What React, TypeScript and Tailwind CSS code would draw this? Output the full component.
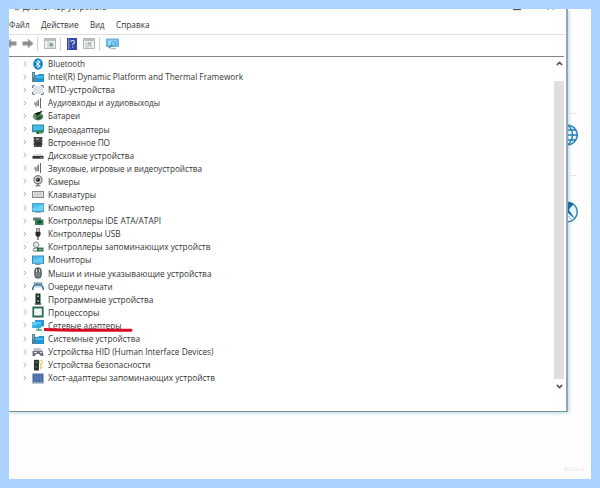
import type { ReactNode } from "react";
import { ChevronDown, ChevronRight, ChevronUp } from "lucide-react";

const icons: Record<string, ReactNode> = {
  bluetooth: (
    <>
      <ellipse cx="6" cy="6" rx="4.8" ry="5.8" fill="#0a84d8" />
      <path d="M3.6 3.8 8.2 8 6 10V2l2.2 2-4.6 4.2" fill="none" stroke="#fff" strokeWidth="1" />
    </>
  ),
  system: (
    <>
      <path d="M0 1h3v10H0z" fill="#5d808e" />
      <path d="M3 4h3l1-1h5v8H3z" fill="#2496cf" />
      <path d="M4 5h7v2H4z" fill="#4db9e8" />
      <path d="M1 3h1M1 5h1" stroke="#9be0f5" />
    </>
  ),
  mtd: (
    <>
      <path d="M1 2h10v8H1z" fill="#dce3ea" />
      <path d="M.5 4V1.5H3M9 1.5h2.5V4M.5 8v2.5H3M9 10.5h2.5V8" fill="none" stroke="#5f7180" strokeDasharray="2 .6" />
    </>
  ),
  speaker: (
    <>
      <path d="M2 5h2l3-3v8L4 8H2z" fill="#b4b7b9" />
      <path d="M6.3 3v6M8.5 1v10" stroke="#66696c" strokeWidth="1" />
      <path d="M4 6v4" stroke="#77797b" />
    </>
  ),
  battery: (
    <>
      <ellipse cx="6" cy="6.5" rx="5.2" ry="3.9" fill="#3f7952" />
      <path d="M1 7c3-4 6-4 10-2" stroke="#9bcc80" fill="none" />
      <path d="M3 3.5 6 5l4-4M5 9l4-2" stroke="#20362b" strokeWidth="1.2" />
      <path d="M2 8h2" stroke="#c8e2af" />
    </>
  ),
  video: (
    <>
      <path d="M0 1.5h12v7.7H0z" fill="#3184a5" />
      <path d="M1 2.5h10v5H1z" fill="#43bce7" />
      <path d="M4 7h7v3.5H4z" fill="#378e61" />
      <path d="M5 9h2v2H5z" fill="#2e5c50" />
    </>
  ),
  firmware: (
    <>
      <path d="M2 1h8v10H2z" fill="#474747" />
      <path d="M1 2h10M1 5h10M1 8h10" stroke="#606060" strokeDasharray="1 8 1" />
      <path d="M4 2h3v2H4z" fill="#878787" />
      <path d="M4 6h5v3H4z" fill="#303030" />
    </>
  ),
  disk: (
    <>
      <path d="M2 5h8l1.5 2H.5z" fill="#d6d6d6" />
      <path d="M.5 7h11v2.7H.5z" fill="#303437" />
      <path d="M8.5 8.5H10" stroke="#72bd95" />
    </>
  ),
  camera: (
    <>
      <circle cx="6" cy="4.8" r="4.1" fill="#cfcfcf" stroke="#666" />
      <circle cx="6" cy="4.8" r="2" fill="#292929" />
      <path d="M6 8v2M3.5 10.8h5" stroke="#555" />
      <circle cx="5.5" cy="4.2" r=".5" fill="#fff" />
    </>
  ),
  keyboard: (
    <>
      <rect x=".5" y="3.5" width="11" height="6" fill="#e1e1e1" stroke="#888" />
      <path d="M2 5h8M2 6.5h8M3 8h6" stroke="#b5b5b5" strokeWidth=".7" strokeDasharray="1 .5" />
    </>
  ),
  computer: (
    <>
      <path d="M0 1h12v9H0z" fill="#449cc6" />
      <path d="M.7 1.7h10.6v7H.7z" fill="#4dbaf0" />
      <path d="M.7 6 11.3 3v5.7H.7z" fill="#71cff8" />
      <path d="M3 10.5h6" stroke="#a2afb8" />
    </>
  ),
  ide: (
    <>
      <path d="M1 2.5h8v3H1z" fill="#667b70" />
      <path d="M3 4.5h8.5V10H3z" fill="#2b7a50" />
      <path d="M6 6h3v2H6z" fill="#173e2e" />
      <path d="M9 9v1.5M5 9v1" stroke="#688f75" />
    </>
  ),
  usb: (
    <>
      <path d="M4.5.5h3V4h-3z" fill="#c1c1c1" stroke="#555" strokeWidth=".7" />
      <path d="M3.5 4h5v3L7 9H5L3.5 7z" fill="#292929" />
      <path d="M6 8v4" stroke="#555" strokeWidth="1.3" />
    </>
  ),
  storage: (
    <>
      <circle cx="4.2" cy="3.8" r="2.8" fill="#e3e7e4" stroke="#819087" />
      <path d="M.7 9 3 7h3v3H1" fill="none" stroke="#5f6f66" />
      <path d="M5 6.5h6.5v4H5z" fill="#327451" />
      <path d="M7 8h3v1H7z" fill="#94b69f" />
    </>
  ),
  monitor: (
    <>
      <path d="M0 1.5h12v8.3H0z" fill="#3887b1" />
      <path d="M1 2.3h10v6.5H1z" fill="#4ab8ef" />
      <path d="M1 6 11 3v5.8H1z" fill="#64caf8" />
      <path d="M3.5 10.5h5" stroke="#84959f" />
    </>
  ),
  mouse: (
    <>
      <rect x="2.8" y=".8" width="6.4" height="10.4" rx="3" fill="#768286" stroke="#454e52" />
      <path d="M4.6 2v3M7.3 2v3" stroke="#d4dddd" />
      <path d="M6 1v4.5" stroke="#364044" />
    </>
  ),
  printer: (
    <>
      <path d="M1.5 3.2h9" fill="none" stroke="#6f8490" strokeWidth="1.3" />
      <path d="M.8 10V8l1.8-3h6.8l1.8 3v2" fill="none" stroke="#25698d" strokeWidth="1.4" />
      <path d="M3 7h6" stroke="#a7c2ce" />
    </>
  ),
  software: (
    <>
      <path d="M3.5.5h5v11h-5z" fill="#1e3328" />
      <circle cx="6" cy="3.2" r="1" fill="#9cb5a4" />
      <path d="M5 7h2v2H5z" fill="#6d9c80" />
      <path d="M2.5 11h7" stroke="#445249" />
    </>
  ),
  cpu: (
    <>
      <path d="M1.3 1.5h9.4v9H1.3z" fill="#fff" stroke="#2a6c53" strokeWidth="1.8" />
      <path d="M3 3.2h6v5.6H3z" fill="#f1f5f2" />
    </>
  ),
  network: (
    <>
      <path d="M3 1h9v6.5H3z" fill="#289bd6" />
      <path d="M0 3h9v6H0z" fill="#5bc9f6" />
      <path d="M.5 7 9 4v5H.5z" fill="#35aee9" />
      <path d="M6.5 8v3.5M4 11h6" stroke="#44aa77" strokeWidth="1.5" />
    </>
  ),
  hid: (
    <>
      <path d="M2 2h6l3 3H1z" fill="#c0c4cb" />
      <path d="M.5 5h10l1 5H9L7 8H4l-1 2H.5z" fill="#68717f" />
      <path d="M2 6.5h3M8 6.5h2" stroke="#dce2eb" />
      <path d="M9 8h2" stroke="#9c5361" />
    </>
  ),
  security: (
    <>
      <path d="M2 .8h5v10.7H2z" fill="#24352b" />
      <path d="M3.3 3h2M3.3 8h2" stroke="#759174" />
      <circle cx="8.8" cy="3.2" r="1.7" fill="none" stroke="#dfbd63" />
      <path d="M8.8 5v5.5M9 8h1.6" stroke="#dfbd63" />
    </>
  ),
  host: (
    <>
      <path d="M.5 1.5h11v9H.5z" fill="#4467a1" />
      <path d="M2 3h8M2 5h8M2 7h8M2 9h8" stroke="#6f8cbe" strokeDasharray="2 1" />
      <path d="M4 4h4v3H4z" fill="#5476b4" />
      <path d="M0 11h12" stroke="#8290a5" />
    </>
  ),
};

// width is the label length in the tree, in pixels
const devices: { label: string; icon: string; width: number; marked?: boolean }[] = [
  { label: "Bluetooth", icon: "bluetooth", width: 37 },
  { label: "Intel(R) Dynamic Platform and Thermal Framework", icon: "system", width: 195 },
  { label: "MTD-устройства", icon: "mtd", width: 67 },
  { label: "Аудиовходы и аудиовыходы", icon: "speaker", width: 112 },
  { label: "Батареи", icon: "battery", width: 32 },
  { label: "Видеоадаптеры", icon: "video", width: 61.5 },
  { label: "Встроенное ПО", icon: "firmware", width: 62 },
  { label: "Дисковые устройства", icon: "disk", width: 86 },
  { label: "Звуковые, игровые и видеоустройства", icon: "speaker", width: 154 },
  { label: "Камеры", icon: "camera", width: 32 },
  { label: "Клавиатуры", icon: "keyboard", width: 48 },
  { label: "Компьютер", icon: "computer", width: 46.5 },
  { label: "Контроллеры IDE ATA/ATAPI", icon: "ide", width: 113 },
  { label: "Контроллеры USB", icon: "usb", width: 72.5 },
  { label: "Контроллеры запоминающих устройств", icon: "storage", width: 162.5 },
  { label: "Мониторы", icon: "monitor", width: 43.5 },
  { label: "Мыши и иные указывающие устройства", icon: "mouse", width: 163.5 },
  { label: "Очереди печати", icon: "printer", width: 64.5 },
  { label: "Программные устройства", icon: "software", width: 105.5 },
  { label: "Процессоры", icon: "cpu", width: 51.5 },
  { label: "Сетевые адаптеры", icon: "network", width: 73.5, marked: true },
  { label: "Системные устройства", icon: "system", width: 92 },
  { label: "Устройства HID (Human Interface Devices)", icon: "hid", width: 165.5 },
  { label: "Устройства безопасности", icon: "security", width: 102.5 },
  { label: "Хост-адаптеры запоминающих устройств", icon: "host", width: 167 },
];

function Label({ text, width }: { text: string; width: number }) {
  return (
    <svg className="h-[13px] shrink-0 overflow-visible" style={{ width }} role="text">
      <text x="0" y="9.5" textLength={width} fontSize="8.2" fill="#343434" lengthAdjust="spacingAndGlyphs">
        {text}
      </text>
    </svg>
  );
}

function DeviceRow({ label, icon, width, marked }: (typeof devices)[number]) {
  return (
    <li className="relative flex h-[13.1px] items-center">
      <ChevronRight className="ml-[12px] size-[8px] shrink-0 text-[#a0a0a0]" strokeWidth={2.4} />
      <svg className="ml-[3px] mr-[4px] size-[12px] shrink-0" viewBox="0 0 12 12">
        {icons[icon]}
      </svg>
      <Label text={label} width={width} />
      {marked && (
        <svg className="absolute left-[35px] top-[8px] h-[6px] w-[89px]" viewBox="0 0 89 6">
          <path d="M1 2.6C20 3.4 50 3.5 87 3.2" fill="none" stroke="#d90b20" strokeWidth="3" strokeLinecap="round" />
        </svg>
      )}
    </li>
  );
}

function ConsoleIcon({ help }: { help?: boolean }) {
  return (
    <svg className="h-[11px] w-[12px]" viewBox="0 0 12 11">
      <path d="M.5.5h11v10H.5z" fill="#f2f3f2" stroke="#b4b6b5" />
      <path d="M1 2h10" stroke="#a5adb2" strokeWidth="1.5" />
      <path d={help ? "M8 3v7M2 5h4M2 7h4M2 9h4" : "M4 3v7M6 5h4M6 7h4M6 9h4"} stroke="#b9c0bb" />
      <path d={help ? "M5 5.2h2v1.5L6 8" : "m6 5 3 1.7L6 8.5z"} fill={help ? "none" : "#78ad89"} stroke="#78a086" />
    </svg>
  );
}

function Arrow({ back }: { back?: boolean }) {
  return (
    <svg className={back ? "h-[11px] w-[12px] -scale-x-100" : "h-[11px] w-[12px]"} viewBox="0 0 12 11">
      <path d="M.8 3.8h5.4V1.2l5 4.3-5 4.3V7.2H.8z" fill="#8c8c8c" stroke="#aaa" strokeWidth=".8" />
    </svg>
  );
}

function Toolbar() {
  return (
    <div className="flex h-[21px] shrink-0 items-center pb-[4px]">
      <div className="-ml-[4px]"><Arrow back /></div>
      <div className="ml-[5px]"><Arrow /></div>
      <div className="ml-[3px] h-[14px] w-px bg-[#cfcfcf]" />
      <div className="ml-[6px]"><ConsoleIcon /></div>
      <div className="ml-[4px] h-[14px] w-px bg-[#d3d3d3]" />
      <svg className="ml-[6px] h-[12px] w-[10px]" viewBox="0 0 10 12">
        <path d="M0 0h10v12H0z" fill="#3449a5" />
        <path d="M1 1h1.5v10H1z" fill="#7485cf" />
        <path d="M3.7 4c.2-2 3.8-2 3.8 0 0 1.4-1.8 1.3-1.8 3M5.7 8.4v1" fill="none" stroke="#e3e8fb" strokeWidth="1.1" />
      </svg>
      <div className="ml-[6px]"><ConsoleIcon help /></div>
      <div className="ml-[4px] h-[14px] w-px bg-[#d3d3d3]" />
      <svg className="ml-[6px] h-[12px] w-[13px]" viewBox="0 0 13 12">
        <path d="M.5 1h12v7.5H.5z" fill="#6ebfeb" stroke="#6daed5" />
        <path d="M2 2.5h8v4H2z" fill="#9bdcfa" />
        <circle cx="7.5" cy="5.5" r="2.2" fill="#80ccf2" stroke="#5ba5d5" />
        <path d="m5.8 7.2-3 3" stroke="#5286a5" strokeWidth="1.5" />
        <path d="M5 10.7h5" stroke="#91aab9" />
      </svg>
    </div>
  );
}

function DeviceManager() {
  return (
    <section className="flex h-[402.5px] w-[559px] flex-col overflow-hidden border-b-[1.5px] border-r-2 border-b-[#74919f] border-r-[#93a6b9] bg-white">
      <header className="flex h-[3px] shrink-0 overflow-hidden">
        <svg className="h-[3px] w-full" viewBox="0 0 557 3" preserveAspectRatio="xMinYMin">
          <text x="14" y="1" textLength="84" fontSize="8.2" fill="#303030">Диспетчер устройств</text>
          <path d="M6 .7h4" stroke="#777" />
          <path d="M504 .5h8" stroke="#555" strokeWidth="1.3" />
          <path d="M538 .3h2M543 .3h2" stroke="#aaa" />
        </svg>
      </header>
      <nav className="flex h-[23px] shrink-0 items-center border-b border-[#dedede] pt-[3px]">
        <Label text="Файл" width={20.5} />
        <div className="w-[11.5px]" />
        <Label text="Действие" width={37.5} />
        <div className="w-[11.5px]" />
        <Label text="Вид" width={14.5} />
        <div className="w-[11.5px]" />
        <Label text="Справка" width={33.5} />
      </nav>
      <Toolbar />
      <div className="mr-[2px] flex h-[336px] shrink-0 border-t border-[#858585]">
        <ul className="flex-1">
          {devices.map((device) => (
            <DeviceRow key={device.label} {...device} />
          ))}
        </ul>
        <div className="flex w-[10px] flex-col items-center pt-[2px]">
          <ChevronUp className="size-[9px] text-[#555]" strokeWidth={4} />
          <div className="mt-[13px] h-[298px] w-full bg-[#dfdfdf]" />
          <ChevronDown className="mt-[3px] size-[9px] shrink-0 text-[#555]" strokeWidth={4} />
        </div>
      </div>
    </section>
  );
}

function DesktopStrip() {
  return (
    <aside className="flex w-[22px] flex-col overflow-hidden pt-[104px]">
      <div className="h-px w-[8px] bg-[#e4e4e4]" />
      <svg className="mt-[10px] h-[22px] w-[11px]" viewBox="11 0 11 22">
        <circle cx="10.5" cy="11" r="9.8" fill="#e4f4fa" stroke="#3588b8" strokeWidth="1.6" />
        <path d="M10.5 1v20M1 11h20M2 6h17M2 16h17M11 1q9 10 0 20" fill="none" stroke="#267eb3" strokeWidth="1.3" />
      </svg>
      <div className="mt-[29px] h-px w-[8px] bg-[#e4e4e4]" />
      <svg className="mt-[25px] h-[22px] w-[11px]" viewBox="11 0 11 22">
        <circle cx="10.5" cy="11" r="9.8" fill="#e6f5fa" stroke="#4287ad" strokeWidth="1.5" />
        <path d="M10 1 17 3l-4 4-1 2 6 9-8-7z" fill="#166aa8" />
        <path d="m11 15 4 4" stroke="#90c9df" />
      </svg>
    </aside>
  );
}

export default function App() {
  return (
    <main className="h-[488px] w-[600px] overflow-hidden bg-[#acd3ff] p-[9px] font-['Open_Sans','Noto_Sans',sans-serif]">
      <div className="flex h-[470px] w-[582px] flex-col bg-[#fefefe]">
        <div className="flex">
          <div className="shadow-[1px_1px_4px_#b5d6e2]">
            <DeviceManager />
          </div>
          <DesktopStrip />
        </div>
        <footer className="mt-auto flex justify-end pb-[6px] pr-[7px] text-[5px] leading-[8px] text-[#dedede]">
          BLOG.ru
        </footer>
      </div>
    </main>
  );
}
